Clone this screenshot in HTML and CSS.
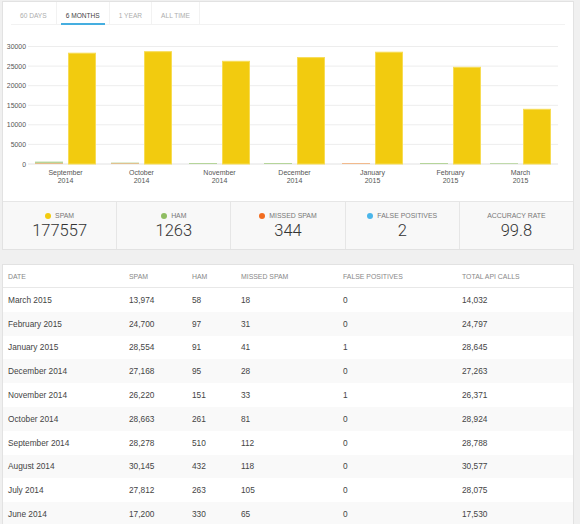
FILE: index.html
```html
<!DOCTYPE html>
<html>
<head>
<meta charset="utf-8">
<link rel="stylesheet" href="styles.css">
</head>
<body>
<div class="card">
  <div class="tabs">
    <div class="tab"><span>60 DAYS</span></div>
    <div class="tab active"><span>6 MONTHS</span></div>
    <div class="tab"><span>1 YEAR</span></div>
    <div class="tab"><span>ALL TIME</span></div>
  </div>
  <svg class="chart" width="570" height="176" viewBox="3 25 570 176">
    <g class="grid">
      <line x1="28" x2="558" y1="46.5" y2="46.5"/>
      <line x1="28" x2="558" y1="66.1" y2="66.1"/>
      <line x1="28" x2="558" y1="85.7" y2="85.7"/>
      <line x1="28" x2="558" y1="105.3" y2="105.3"/>
      <line x1="28" x2="558" y1="124.8" y2="124.8"/>
      <line x1="28" x2="558" y1="144.4" y2="144.4"/>
      <line class="axis" x1="28" x2="558" y1="164" y2="164"/>
    </g>
    <g class="ylab">
      <text x="26" y="49">30000</text>
      <text x="26" y="68.6">25000</text>
      <text x="26" y="88.2">20000</text>
      <text x="26" y="107.8">15000</text>
      <text x="26" y="127.3">10000</text>
      <text x="26" y="146.9">5000</text>
      <text x="26" y="166.5">0</text>
    </g>
    <g class="small">
      <rect class="ham" x="35" y="161.6" width="28" height="2"/>
      <rect class="miss" x="35" y="163.3" width="28" height="0.7"/>
      <rect class="ham" x="111" y="162.6" width="28" height="1.1"/>
      <rect class="miss" x="111" y="163.4" width="28" height="0.6"/>
      <rect class="ham" x="189" y="163" width="28" height="1"/>
      <rect class="ham" x="264" y="163" width="28" height="1"/>
      <rect class="miss" x="342" y="163.2" width="28" height="0.8"/>
      <rect class="ham" x="420" y="163" width="28" height="1"/>
      <rect class="ham" x="490" y="163.2" width="28" height="0.8"/>
    </g>
    <g class="spam">
      <rect x="68.5" y="53.2" width="27" height="110.8"/>
      <rect x="144.5" y="51.7" width="27" height="112.3"/>
      <rect x="222.5" y="61.3" width="27" height="102.7"/>
      <rect x="297.5" y="57.6" width="27" height="106.4"/>
      <rect x="375.5" y="52.2" width="27" height="111.8"/>
      <rect x="453.5" y="67.3" width="27" height="96.7"/>
      <rect x="523.5" y="109.3" width="27" height="54.7"/>
    </g>
    <g class="xlab">
      <text x="65.5" y="174.5">September</text><text x="65.5" y="182.5">2014</text>
      <text x="141.5" y="174.5">October</text><text x="141.5" y="182.5">2014</text>
      <text x="219.5" y="174.5">November</text><text x="219.5" y="182.5">2014</text>
      <text x="294.5" y="174.5">December</text><text x="294.5" y="182.5">2014</text>
      <text x="372.5" y="174.5">January</text><text x="372.5" y="182.5">2015</text>
      <text x="450.5" y="174.5">February</text><text x="450.5" y="182.5">2015</text>
      <text x="520.5" y="174.5">March</text><text x="520.5" y="182.5">2015</text>
    </g>
  </svg>
  <div class="stats">
    <div class="stat"><div class="label"><i class="dot spam-dot"></i>SPAM</div><div class="value">177557</div></div>
    <div class="stat"><div class="label"><i class="dot ham-dot"></i>HAM</div><div class="value">1263</div></div>
    <div class="stat"><div class="label"><i class="dot miss-dot"></i>MISSED SPAM</div><div class="value">344</div></div>
    <div class="stat"><div class="label"><i class="dot fp-dot"></i>FALSE POSITIVES</div><div class="value">2</div></div>
    <div class="stat"><div class="label">ACCURACY RATE</div><div class="value">99.8</div></div>
  </div>
</div>

<div class="card table-card">
  <table>
    <colgroup>
      <col class="c1"><col class="c2"><col class="c3"><col class="c4"><col class="c5"><col class="c6">
    </colgroup>
    <thead>
      <tr><th>DATE</th><th>SPAM</th><th>HAM</th><th>MISSED SPAM</th><th>FALSE POSITIVES</th><th>TOTAL API CALLS</th></tr>
    </thead>
    <tbody>
      <tr><td>March 2015</td><td>13,974</td><td>58</td><td>18</td><td>0</td><td>14,032</td></tr>
      <tr><td>February 2015</td><td>24,700</td><td>97</td><td>31</td><td>0</td><td>24,797</td></tr>
      <tr><td>January 2015</td><td>28,554</td><td>91</td><td>41</td><td>1</td><td>28,645</td></tr>
      <tr><td>December 2014</td><td>27,168</td><td>95</td><td>28</td><td>0</td><td>27,263</td></tr>
      <tr><td>November 2014</td><td>26,220</td><td>151</td><td>33</td><td>1</td><td>26,371</td></tr>
      <tr><td>October 2014</td><td>28,663</td><td>261</td><td>81</td><td>0</td><td>28,924</td></tr>
      <tr><td>September 2014</td><td>28,278</td><td>510</td><td>112</td><td>0</td><td>28,788</td></tr>
      <tr><td>August 2014</td><td>30,145</td><td>432</td><td>118</td><td>0</td><td>30,577</td></tr>
      <tr><td>July 2014</td><td>27,812</td><td>263</td><td>105</td><td>0</td><td>28,075</td></tr>
      <tr><td>June 2014</td><td>17,200</td><td>330</td><td>65</td><td>0</td><td>17,530</td></tr>
    </tbody>
  </table>
</div>
</body>
</html>
```

FILE: styles.css
```css
html, body {
  margin: 0;
  padding: 0;
  background: #f0f0f0;
}
body {
  padding: 1px 6px 0 2px;
  font-family: "Liberation Sans", Arial, sans-serif;
  color: #444;
  overflow: hidden;
}
.card {
  background: #fff;
  border: 1px solid #e2e2e2;
  width: 570px;
}
.tabs {
  display: flex;
  margin: 0 8px;
  height: 22px;
  border-bottom: 1px solid #f2f2f2;
}
.tab {
  padding: 0 4px;
  border-right: 1px solid #f2f2f2;
}
.tab span {
  display: block;
  padding: 6px 5px 0;
  line-height: 15px;
  height: 15px;
  font-size: 6.6px;
  color: #adadad;
  border-bottom: 2px solid transparent;
}
.tab.active span {
  color: #444;
  border-bottom-color: #45aee0;
}
.chart {
  display: block;
}
.grid line {
  stroke: #ededed;
  stroke-width: 1;
}
.grid line.axis {
  stroke: #e2e2e2;
}
.ylab text {
  font-size: 6.9px;
  fill: #555;
  text-anchor: end;
}
.xlab text {
  font-size: 7px;
  fill: #555;
  text-anchor: middle;
}
.spam rect {
  fill: #f2cb0f;
  stroke: #f7dc55;
  stroke-width: 1;
}
.small rect.ham {
  fill: #b5d59a;
}
.small rect.miss {
  fill: #f3ad75;
}
.stats {
  display: flex;
  border-top: 1px solid #e6e6e6;
  background: #f8f8f8;
}
.stat {
  flex: 1;
  text-align: center;
  padding: 9px 0 8px;
  border-left: 1px solid #e6e6e6;
}
.stat:first-child {
  border-left: none;
}
.label {
  font-size: 6.9px;
  line-height: 10px;
  height: 10px;
  color: #777;
  display: flex;
  justify-content: center;
  align-items: center;
}
.dot {
  display: inline-block;
  width: 6px;
  height: 6px;
  border-radius: 50%;
  margin-right: 4px;
}
.spam-dot { background: #f2cb0f; }
.ham-dot { background: #8fbd62; }
.miss-dot { background: #f26c1e; }
.fp-dot { background: #4bb6ea; }
.value {
  font-family: Roboto, "Liberation Sans", sans-serif;
  font-weight: 300;
  font-size: 16.5px;
  line-height: 20px;
  color: #333;
}
.table-card {
  margin-top: 14px;
}
table {
  width: 100%;
  table-layout: fixed;
  border-collapse: separate;
  border-spacing: 0;
}
col.c1 { width: 121px; }
col.c2 { width: 63px; }
col.c3 { width: 49px; }
col.c4 { width: 102px; }
col.c5 { width: 119px; }
col.c6 { width: 116px; }
th {
  height: 22px;
  padding: 0 0 0 5px;
  text-align: left;
  font-weight: normal;
  font-size: 6.9px;
  color: #888;
  border-bottom: 1px solid #e8e8e8;
}
td {
  height: 23.8px;
  padding: 0 0 0 5px;
  font-size: 8.3px;
  color: #444;
  white-space: nowrap;
}
tbody tr:nth-child(even) td {
  background: #f9f9f9;
}
```
